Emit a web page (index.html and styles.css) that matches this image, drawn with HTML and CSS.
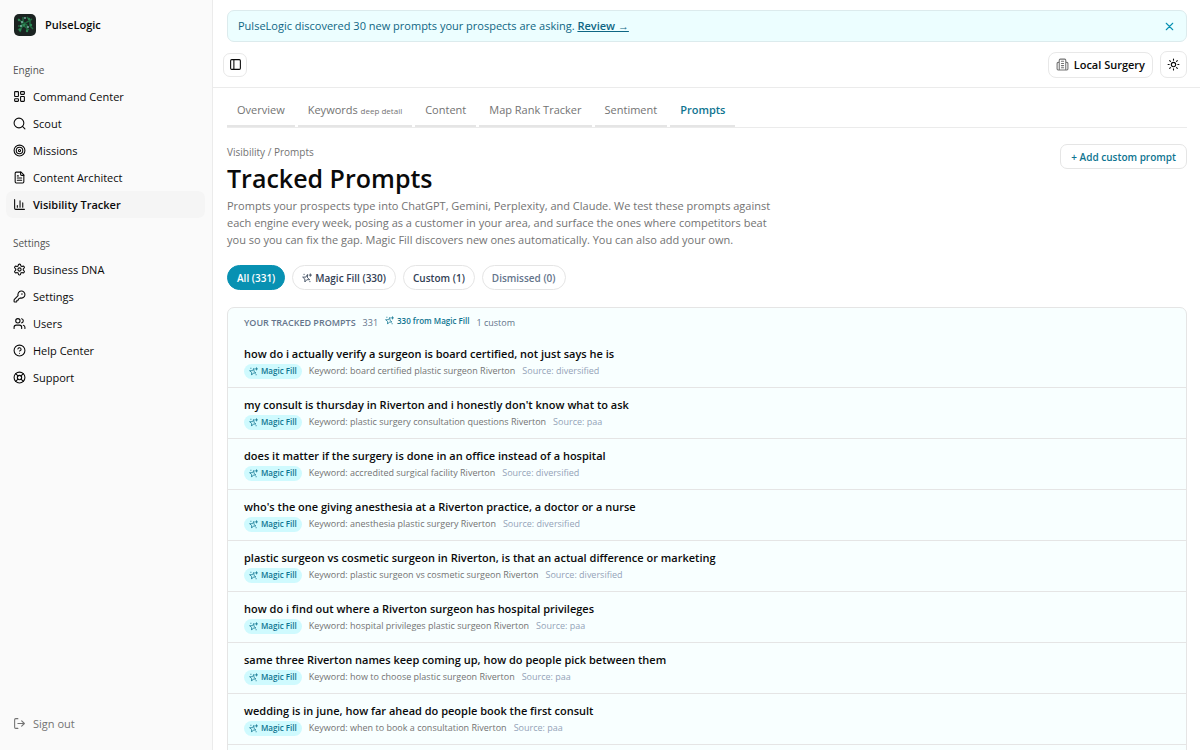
FILE: index.html
```
<!DOCTYPE html>
<html lang="en">

<head>
    <meta charset="UTF-8">
    <meta name="viewport" content="width=device-width, initial-scale=1.0">
    <title>Tracked Prompts - PulseLogic</title>
    <link rel="stylesheet" href="styles.css">
</head>

<body>

    <!-- icons shared by the page -->
    <svg class="sprite" aria-hidden="true">
        <symbol id="i-dashboard" viewBox="0 0 24 24"><rect x="3" y="3" width="7" height="9" rx="1"/><rect x="14" y="3" width="7" height="5" rx="1"/><rect x="14" y="12" width="7" height="9" rx="1"/><rect x="3" y="16" width="7" height="5" rx="1"/></symbol>
        <symbol id="i-search" viewBox="0 0 24 24"><circle cx="11" cy="11" r="9"/><path d="m22 22-4.5-4.5"/></symbol>
        <symbol id="i-target" viewBox="0 0 24 24"><circle cx="12" cy="12" r="10"/><circle cx="12" cy="12" r="6"/><circle cx="12" cy="12" r="2"/></symbol>
        <symbol id="i-file" viewBox="0 0 24 24"><path d="M15 2H6a2 2 0 0 0-2 2v16a2 2 0 0 0 2 2h12a2 2 0 0 0 2-2V7Z"/><path d="M14 2v4a2 2 0 0 0 2 2h4M10 9H8M16 13H8M16 17H8"/></symbol>
        <symbol id="i-chart" viewBox="0 0 24 24"><path d="M3 3v16a2 2 0 0 0 2 2h16M18 17V9M13 17V5M8 17v-3"/></symbol>
        <symbol id="i-gear" viewBox="0 0 24 24"><path d="M12.22 2h-.44a2 2 0 0 0-2 2v.18a2 2 0 0 1-1 1.73l-.43.25a2 2 0 0 1-2 0l-.15-.08a2 2 0 0 0-2.73.73l-.22.38a2 2 0 0 0 .73 2.73l.15.1a2 2 0 0 1 1 1.72v.51a2 2 0 0 1-1 1.74l-.15.09a2 2 0 0 0-.73 2.73l.22.38a2 2 0 0 0 2.73.73l.15-.08a2 2 0 0 1 2 0l.43.25a2 2 0 0 1 1 1.73V20a2 2 0 0 0 2 2h.44a2 2 0 0 0 2-2v-.18a2 2 0 0 1 1-1.73l.43-.25a2 2 0 0 1 2 0l.15.08a2 2 0 0 0 2.73-.73l.22-.39a2 2 0 0 0-.73-2.73l-.15-.08a2 2 0 0 1-1-1.74v-.5a2 2 0 0 1 1-1.74l.15-.09a2 2 0 0 0 .73-2.73l-.22-.38a2 2 0 0 0-2.73-.73l-.15.08a2 2 0 0 1-2 0l-.43-.25a2 2 0 0 1-1-1.73V4a2 2 0 0 0-2-2z"/><circle cx="12" cy="12" r="3"/></symbol>
        <symbol id="i-key" viewBox="0 0 24 24"><path d="M2.586 17.414A2 2 0 0 0 2 18.828V21a1 1 0 0 0 1 1h3a1 1 0 0 0 1-1v-1a1 1 0 0 1 1-1h1a1 1 0 0 0 1-1v-1a1 1 0 0 1 1-1h.172a2 2 0 0 0 1.414-.586l.814-.814a6.5 6.5 0 1 0-4-4z"/><circle cx="16.5" cy="7.5" r=".5"/></symbol>
        <symbol id="i-users" viewBox="0 0 24 24"><path d="M16 21v-2a4 4 0 0 0-4-4H6a4 4 0 0 0-4 4v2M22 21v-2a4 4 0 0 0-3-3.87M16 3.13a4 4 0 0 1 0 7.75"/><circle cx="9" cy="7" r="4"/></symbol>
        <symbol id="i-help" viewBox="0 0 24 24"><circle cx="12" cy="12" r="10"/><path d="M9.09 9a3 3 0 0 1 5.83 1c0 2-3 3-3 3M12 17h.01"/></symbol>
        <symbol id="i-support" viewBox="0 0 24 24"><circle cx="12" cy="12" r="10"/><circle cx="12" cy="12" r="4"/><path d="m4.93 4.93 4.24 4.24M14.83 9.17l4.24-4.24M14.83 14.83l4.24 4.24M9.17 14.83l-4.24 4.24"/></symbol>
        <symbol id="i-logout" viewBox="0 0 24 24"><path d="M9 21H5a2 2 0 0 1-2-2V5a2 2 0 0 1 2-2h4M16 17l5-5-5-5M21 12H9"/></symbol>
        <symbol id="i-panel" viewBox="0 0 24 24"><rect x="3" y="3" width="18" height="18" rx="2"/><path d="M9 3v18"/></symbol>
        <symbol id="i-building" viewBox="0 0 24 24"><path d="M6 22V4a2 2 0 0 1 2-2h8a2 2 0 0 1 2 2v18ZM6 8H4a2 2 0 0 0-2 2v10a2 2 0 0 0 2 2h2M18 8h2a2 2 0 0 1 2 2v10a2 2 0 0 1-2 2h-2M10 6h4M10 10h4M10 14h4M10 18h4"/></symbol>
        <symbol id="i-sun" viewBox="0 0 24 24"><circle cx="12" cy="12" r="4"/><path d="M12 2v2M12 20v2M4.93 4.93l1.41 1.41M17.66 17.66l1.41 1.41M2 12h2M20 12h2M6.34 17.66l-1.41 1.41M19.07 4.93l-1.41 1.41"/></symbol>
        <symbol id="i-close" viewBox="0 0 24 24"><path d="M18 6 6 18M6 6l12 12"/></symbol>
        <symbol id="i-sparkles" viewBox="0 0 24 24"><path d="M13.1 4.5l.1 7 5.3 4.6-7 .1-4.6 5.3-.1-7-5.3-4.6 7-.1zM20 2v6M17 5h6M19 20v1M5 3v1"/></symbol>
    </svg>

    <div class="app">
        <aside class="sidebar">
            <div class="brand">
                <svg class="logo" viewBox="0 0 22 22">
                    <rect width="22" height="22" rx="5" fill="#1b2321"/>
                    <path d="M4 5l4 3v5l-4 3M9 3v5l4 3v7M13 3l3 4v5l3 3M4 12h6l5 4M18 5l-5 3-5 4-2 6" fill="none" stroke="#1f6b40" stroke-width="1.5"/>
                    <g fill="#2f8655"><circle cx="5" cy="6" r="1.2"/><circle cx="15" cy="5" r="1.2"/><circle cx="10" cy="11" r="1.5"/><circle cx="17" cy="11" r="1.2"/><circle cx="6" cy="16" r="1.2"/><circle cx="13" cy="17" r="1.2"/></g>
                    <g fill="#86b8b0"><circle cx="11" cy="4" r=".9"/><circle cx="8" cy="8" r=".9"/><circle cx="14" cy="13" r=".9"/><circle cx="7" cy="12" r=".9"/></g>
                </svg>
                <span>PulseLogic</span>
            </div>
            <nav class="menu">
                <h2>Engine</h2>
                <a href="#"><svg class="icon"><use href="#i-dashboard"/></svg>Command Center</a>
                <a href="#"><svg class="icon"><use href="#i-search"/></svg>Scout</a>
                <a href="#"><svg class="icon"><use href="#i-target"/></svg>Missions</a>
                <a href="#"><svg class="icon"><use href="#i-file"/></svg>Content Architect</a>
                <a href="#" class="active"><svg class="icon"><use href="#i-chart"/></svg>Visibility Tracker</a>
            </nav>
            <nav class="menu">
                <h2>Settings</h2>
                <a href="#"><svg class="icon"><use href="#i-gear"/></svg>Business DNA</a>
                <a href="#"><svg class="icon"><use href="#i-key"/></svg>Settings</a>
                <a href="#"><svg class="icon"><use href="#i-users"/></svg>Users</a>
                <a href="#"><svg class="icon"><use href="#i-help"/></svg>Help Center</a>
                <a href="#"><svg class="icon"><use href="#i-support"/></svg>Support</a>
            </nav>
            <button class="signout"><svg class="icon"><use href="#i-logout"/></svg>Sign out</button>
        </aside>

        <main class="main">
            <div class="notice">
                <p>PulseLogic discovered 30 new prompts your prospects are asking. <a href="#">Review →</a></p>
                <button aria-label="Dismiss"><svg class="icon"><use href="#i-close"/></svg></button>
            </div>

            <header class="topbar">
                <button class="square" aria-label="Toggle sidebar"><svg class="icon"><use href="#i-panel"/></svg></button>
                <div class="topbar-right">
                    <button class="business"><svg class="icon"><use href="#i-building"/></svg>Local Surgery</button>
                    <button class="square theme" aria-label="Toggle theme"><svg class="icon"><use href="#i-sun"/></svg></button>
                </div>
            </header>

            <div class="content">
                <nav class="tabs">
                    <a href="#">Overview</a>
                    <a href="#">Keywords <small>deep detail</small></a>
                    <a href="#">Content</a>
                    <a href="#">Map Rank Tracker</a>
                    <a href="#">Sentiment</a>
                    <a href="#" class="active">Prompts</a>
                </nav>

                <div class="heading">
                    <div class="heading-text">
                        <p class="crumbs">Visibility / Prompts</p>
                        <h1>Tracked Prompts</h1>
                        <p class="intro">Prompts your prospects type into ChatGPT, Gemini, Perplexity, and Claude. We test these prompts against each engine every week, posing as a customer in your area, and surface the ones where competitors beat you so you can fix the gap. Magic Fill discovers new ones automatically. You can also add your own.</p>
                    </div>
                    <button class="add">+ Add custom prompt</button>
                </div>

                <div class="filters">
                    <button class="selected">All (331)</button>
                    <button><svg class="icon"><use href="#i-sparkles"/></svg>Magic Fill (330)</button>
                    <button>Custom (1)</button>
                    <button class="muted">Dismissed (0)</button>
                </div>

                <section class="card">
                    <div class="card-head">
                        <h2>YOUR TRACKED PROMPTS</h2>
                        <span class="total">331</span>
                        <span class="from"><svg class="icon"><use href="#i-sparkles"/></svg>330 from Magic Fill</span>
                        <span class="custom">1 custom</span>
                    </div>
                    <ul class="prompts">
                        <li>
                            <h3>how do i actually verify a surgeon is board certified, not just says he is</h3>
                            <p><span class="badge"><svg class="icon"><use href="#i-sparkles"/></svg>Magic Fill</span><span>Keyword: board certified plastic surgeon Riverton</span><span class="source">Source: diversified</span></p>
                        </li>
                        <li>
                            <h3>my consult is thursday in Riverton and i honestly don't know what to ask</h3>
                            <p><span class="badge"><svg class="icon"><use href="#i-sparkles"/></svg>Magic Fill</span><span>Keyword: plastic surgery consultation questions Riverton</span><span class="source">Source: paa</span></p>
                        </li>
                        <li>
                            <h3>does it matter if the surgery is done in an office instead of a hospital</h3>
                            <p><span class="badge"><svg class="icon"><use href="#i-sparkles"/></svg>Magic Fill</span><span>Keyword: accredited surgical facility Riverton</span><span class="source">Source: diversified</span></p>
                        </li>
                        <li>
                            <h3>who's the one giving anesthesia at a Riverton practice, a doctor or a nurse</h3>
                            <p><span class="badge"><svg class="icon"><use href="#i-sparkles"/></svg>Magic Fill</span><span>Keyword: anesthesia plastic surgery Riverton</span><span class="source">Source: diversified</span></p>
                        </li>
                        <li>
                            <h3>plastic surgeon vs cosmetic surgeon in Riverton, is that an actual difference or marketing</h3>
                            <p><span class="badge"><svg class="icon"><use href="#i-sparkles"/></svg>Magic Fill</span><span>Keyword: plastic surgeon vs cosmetic surgeon Riverton</span><span class="source">Source: diversified</span></p>
                        </li>
                        <li>
                            <h3>how do i find out where a Riverton surgeon has hospital privileges</h3>
                            <p><span class="badge"><svg class="icon"><use href="#i-sparkles"/></svg>Magic Fill</span><span>Keyword: hospital privileges plastic surgeon Riverton</span><span class="source">Source: paa</span></p>
                        </li>
                        <li>
                            <h3>same three Riverton names keep coming up, how do people pick between them</h3>
                            <p><span class="badge"><svg class="icon"><use href="#i-sparkles"/></svg>Magic Fill</span><span>Keyword: how to choose plastic surgeon Riverton</span><span class="source">Source: paa</span></p>
                        </li>
                        <li>
                            <h3>wedding is in june, how far ahead do people book the first consult</h3>
                            <p><span class="badge"><svg class="icon"><use href="#i-sparkles"/></svg>Magic Fill</span><span>Keyword: when to book a consultation Riverton</span><span class="source">Source: paa</span></p>
                        </li>
                    </ul>
                </section>
            </div>
        </main>
    </div>

</body>

</html>
```

FILE: styles.css
```
* {
    margin: 0;
    padding: 0;
    box-sizing: border-box;
}

body {
    font-family: "Open Sans", "Noto Sans", sans-serif;
    font-size: 11px;
    line-height: 16px;
    color: #0a0a0a;
    background-color: #fff;
}

button {
    font: inherit;
    color: inherit;
    background: none;
    border: none;
    cursor: pointer;
}

a {
    color: inherit;
    text-decoration: none;
}

.sprite {
    display: none;
}

.icon {
    width: 13px;
    height: 13px;
    flex-shrink: 0;
    fill: none;
    stroke: currentColor;
    stroke-width: 2;
    stroke-linecap: round;
    stroke-linejoin: round;
}

.app {
    display: flex;
    height: 100vh;
    overflow: hidden;
}

/* sidebar */
.sidebar {
    width: 213px;
    flex-shrink: 0;
    display: flex;
    flex-direction: column;
    padding: 14px 7px 13px 6px;
    background-color: #fafafa;
    border-right: 1px solid #ebebeb;
}

.brand {
    display: flex;
    align-items: center;
    gap: 9px;
    padding: 0 8px;
    margin-bottom: 21px;
    font-weight: 600;
}

.logo {
    width: 22px;
    height: 22px;
}

.menu {
    display: flex;
    flex-direction: column;
    margin-bottom: 12px;
}

.menu h2 {
    padding: 0 7px;
    font-size: 10px;
    font-weight: 400;
    line-height: 26px;
    color: #525252;
}

.menu a,
.signout {
    display: flex;
    align-items: center;
    gap: 7px;
    height: 27px;
    padding: 0 7px;
    border-radius: 7px;
}

.menu a.active {
    background-color: #f5f5f5;
    font-weight: 600;
}

.signout {
    margin-top: auto;
    color: #737373;
}

/* top of the page */
.main {
    flex: 1;
    min-width: 0;
    overflow-y: auto;
    scrollbar-width: none;
}

.notice {
    display: flex;
    align-items: center;
    justify-content: space-between;
    height: 32px;
    margin: 10px 13px 0 14px;
    padding: 0 10px;
    background-color: #ecfeff;
    border: 1px solid #dcebed;
    border-radius: 7px;
    color: #0e6684;
}

.notice p a {
    font-weight: 600;
    text-decoration: underline;
}

.notice button {
    display: flex;
    color: #0891b2;
}

.topbar {
    display: flex;
    align-items: center;
    justify-content: space-between;
    height: 46px;
    padding: 0 13px 0 10px;
    border-bottom: 1px solid #ebebeb;
}

.topbar-right {
    display: flex;
    align-items: center;
    gap: 7px;
}

.square {
    display: flex;
    align-items: center;
    justify-content: center;
    width: 24px;
    height: 24px;
    border: 1px solid #e8e8e8;
    border-radius: 7px;
}

.theme {
    width: 27px;
    height: 27px;
}

.business {
    display: flex;
    align-items: center;
    gap: 5px;
    height: 26px;
    padding: 0 7px;
    border: 1px solid #e8e8e8;
    border-radius: 8px;
    font-weight: 600;
}

.business .icon {
    color: #737373;
}

.content {
    padding: 8px 13px 16px 14px;
}

.tabs {
    display: flex;
    gap: 3px;
    margin-bottom: 16px;
    border-bottom: 1px solid #ebebeb;
    color: #737373;
}

.tabs a {
    height: 31px;
    padding: 6px 10px;
    border-bottom: 2px solid #e5e5e5;
}

.tabs small {
    font-size: 8px;
}

.tabs a.active {
    font-weight: 600;
    color: #0e7490;
}

/* heading */
.heading {
    display: flex;
    align-items: flex-start;
    justify-content: space-between;
}

.heading-text {
    max-width: 560px;
}

.crumbs {
    font-size: 10px;
    color: #737373;
}

.heading h1 {
    font-size: 25px;
    font-weight: 600;
    line-height: 37px;
}

.intro {
    line-height: 17px;
    color: #737373;
}

.add {
    height: 25px;
    padding: 0 10px;
    border: 1px solid #e5e5e5;
    border-radius: 7px;
    font-size: 10px;
    font-weight: 600;
    color: #0e7490;
}

.filters {
    display: flex;
    align-items: center;
    gap: 7px;
    margin: 17px 0;
}

.filters button {
    display: flex;
    align-items: center;
    gap: 3px;
    height: 25px;
    padding: 0 9px;
    border: 1px solid #e5e5e5;
    border-radius: 13px;
    font-size: 10px;
    font-weight: 600;
    color: #334155;
}

.filters .icon {
    width: 10px;
    height: 10px;
}

.filters .selected {
    background-color: #0891b2;
    border-color: #0891b2;
    color: #fff;
}

.filters .muted {
    color: #64748b;
}

/* prompt list */
.card {
    padding-bottom: 16px;
    background-color: #f8ffff;
    border: 1px solid #e5e5e5;
    border-radius: 7px;
}

.card-head {
    display: flex;
    align-items: center;
    gap: 7px;
    height: 29px;
    padding: 0 16px;
    font-size: 9px;
    color: #64748b;
}

.card-head h2 {
    font-size: 9px;
    font-weight: 600;
    color: #64748b;
}

.card-head .from {
    display: flex;
    align-items: center;
    gap: 3px;
    margin-bottom: 4px;
    font-size: 8px;
    font-weight: 600;
    color: #0e7490;
}

.card-head .icon,
.badge .icon {
    width: 9px;
    height: 9px;
}

.prompts {
    list-style: none;
}

.prompts li {
    height: 51px;
    padding: 8px 16px 0;
    border-bottom: 1px solid #e5e5e5;
}

.prompts h3 {
    font-size: 11px;
    font-weight: 600;
    line-height: 17px;
}

.prompts p {
    display: flex;
    align-items: center;
    gap: 7px;
    margin-top: 1px;
    font-size: 9px;
    color: #737373;
}

.prompts .source {
    color: #94a3b8;
}

.badge {
    display: flex;
    align-items: center;
    gap: 3px;
    height: 15px;
    padding: 0 5px;
    border-radius: 8px;
    background-color: #cffafe;
    font-size: 8px;
    font-weight: 600;
    color: #0e7490;
}
```
